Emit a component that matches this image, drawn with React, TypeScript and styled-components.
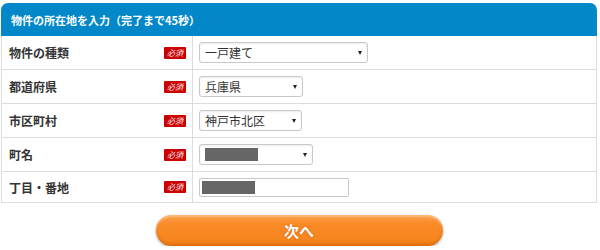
import React from "react";
import styled, { createGlobalStyle } from "styled-components";

const Global = createGlobalStyle`
  html, body { margin: 0; padding: 0; background: #fff; }
  body { font-family: "Noto Sans CJK JP", "Noto Sans", sans-serif; color: #333; }
`;

const Page = styled.div`
  width: 600px;
  padding: 3px 0 0 1px;
  box-sizing: border-box;
`;

const Panel = styled.div`
  width: 596px;
`;

const Header = styled.div`
  height: 33px;
  background: #0288c9;
  border-radius: 7px 7px 0 0;
  display: flex;
  align-items: center;
  padding-left: 10px;
  color: #fff;
  font-size: 11px;
  font-weight: 700;
`;

const Table = styled.div`
  border: 1px solid #dcdcdc;
  border-top: none;
`;

const Row = styled.div<{ $h: number }>`
  display: grid;
  grid-template-columns: 191px 1fr;
  height: ${(p) => p.$h}px;
  border-top: 1px solid #dcdcdc;
  &:first-child { border-top: none; }
`;

const LabelCell = styled.div`
  display: flex;
  align-items: center;
  justify-content: space-between;
  padding: 0 6px 0 7px;
  border-right: 1px solid #dcdcdc;
  font-size: 12px;
  font-weight: 700;
  color: #333;
`;

const Badge = styled.span`
  width: 22px;
  height: 12px;
  background: #cc0000;
  border-radius: 1px;
  color: #fff;
  font-size: 8px;
  font-weight: 400;
  font-style: italic;
  line-height: 12px;
  text-align: center;
  overflow: hidden;
`;

const ValueCell = styled.div`
  display: flex;
  align-items: center;
  padding-left: 6px;
`;

const SelectBox = styled.div<{ $w: number }>`
  width: ${(p) => p.$w}px;
  height: 21px;
  box-sizing: border-box;
  border: 1px solid #c8c8c8;
  border-radius: 3px;
  box-shadow: inset 0 1px 2px rgba(0, 0, 0, 0.08);
  display: flex;
  align-items: center;
  justify-content: space-between;
  padding: 0 5px 0 5px;
  font-size: 12px;
  color: #333;
  background: #fff;
`;

const Arrow = styled.span`
  width: 0;
  height: 0;
  border-left: 2.5px solid transparent;
  border-right: 2.5px solid transparent;
  border-top: 4px solid #222;
  margin-top: 1px;
`;

const InputBox = styled.div`
  width: 150px;
  height: 19px;
  box-sizing: border-box;
  border: 1px solid #c8c8c8;
  border-radius: 2px;
  display: flex;
  align-items: center;
  padding-left: 2px;
  background: #fff;
`;

const Masked = styled.span`
  display: block;
  width: 53px;
  height: 13px;
  background: #666;
`;

const Footer = styled.div`
  display: flex;
  justify-content: center;
  padding-top: 12px;
`;

const NextButton = styled.button`
  width: 287px;
  height: 31px;
  border: none;
  border-radius: 16px;
  background: linear-gradient(to bottom, #fba04d 0%, #f98a26 30%, #f7861f 80%, #ee7a14 100%);
  box-shadow: 0 1px 3px rgba(0, 0, 0, 0.35), inset 0 -2px 3px rgba(180, 80, 0, 0.35), inset 0 2px 2px rgba(255, 220, 180, 0.5);
  color: #fff;
  font-family: "Noto Sans CJK JP", sans-serif;
  font-size: 15px;
  font-weight: 700;
  text-shadow: 0 0 2px rgba(150, 60, 0, 0.5);
  cursor: pointer;
  padding: 0;
`;

type Field =
  | { label: string; kind: "select"; value?: string; width: number; masked?: boolean; h: number }
  | { label: string; kind: "input"; h: number };

const fields: Field[] = [
  { label: "物件の種類", kind: "select", value: "一戸建て", width: 169, h: 33 },
  { label: "都道府県", kind: "select", value: "兵庫県", width: 104, h: 33 },
  { label: "市区町村", kind: "select", value: "神戸市北区", width: 103, h: 33 },
  { label: "町名", kind: "select", width: 114, masked: true, h: 33 },
  { label: "丁目・番地", kind: "input", h: 30 },
];

export default function App() {
  return (
    <Page>
      <Global />
      <Panel>
        <Header>物件の所在地を入力（完了まで45秒）</Header>
        <Table>
          {fields.map((f) => (
            <Row key={f.label} $h={f.h}>
              <LabelCell>
                <span>{f.label}</span>
                <Badge>必須</Badge>
              </LabelCell>
              <ValueCell>
                {f.kind === "select" ? (
                  <SelectBox $w={f.width}>
                    {f.masked ? <Masked /> : <span>{f.value}</span>}
                    <Arrow />
                  </SelectBox>
                ) : (
                  <InputBox>
                    <Masked />
                  </InputBox>
                )}
              </ValueCell>
            </Row>
          ))}
        </Table>
        <Footer>
          <NextButton>次へ</NextButton>
        </Footer>
      </Panel>
    </Page>
  );
}
